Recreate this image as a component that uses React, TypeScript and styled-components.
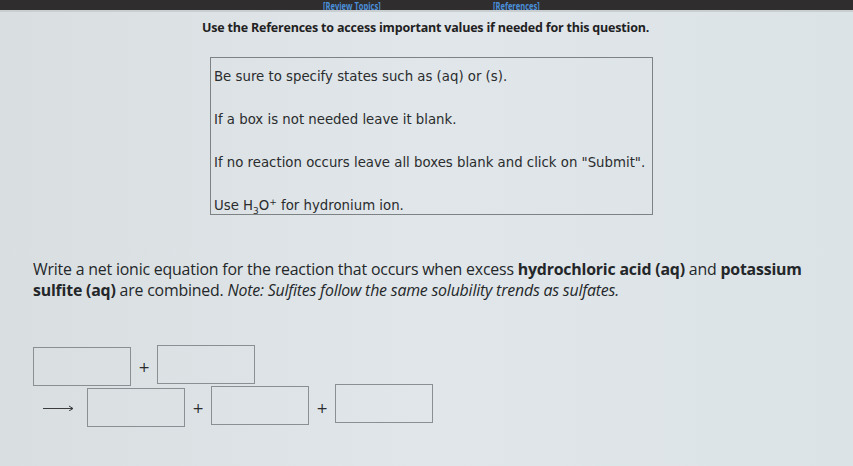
import styled, { createGlobalStyle } from 'styled-components'

const Global = createGlobalStyle`
  html, body { margin: 0; padding: 0; }
  body {
    width: 853px;
    height: 466px;
    overflow: hidden;
    background: linear-gradient(90deg, #d9dfe1 0%, #e0e6e9 50%, #dce3e7 100%);
  }
`

const TopBar = styled.div`
  height: 10px;
  background: #2f2d2e;
  display: flex;
  align-items: flex-end;
  overflow: hidden;
  border-bottom: 2px solid #c9ced0;
`

const TopLink = styled.span<{ $left: number }>`
  margin-left: ${p => p.$left}px;
  flex: 0 0 auto;
  font-family: "Open Sans", sans-serif;
  font-weight: 700;
  font-size: 10.5px;
  line-height: 12px;
  color: #4b8fd9;
  transform: translateY(2px) scaleX(0.72);
  transform-origin: left bottom;
`

const Page = styled.div`
  display: flex;
  flex-direction: column;
`

const Intro = styled.div`
  margin-top: 7px;
  text-align: center;
  padding-right: 2px;
  font-family: "Open Sans", sans-serif;
  font-weight: 700;
  font-size: 12.5px;
  color: #1f2123;
  letter-spacing: -0.2px;
`

const HintBox = styled.div`
  margin: 21px 0 0 210px;
  width: 443px;
  height: 158px;
  border: 1px solid #7d8285;
  box-sizing: border-box;
  padding: 8px 0 0 3px;
  display: flex;
  flex-direction: column;
  gap: 22px;
`

const Hint = styled.div`
  font-family: "DejaVu Sans", Verdana, sans-serif;
  font-size: 13.3px;
  line-height: 21px;
  color: #2a2c2e;
  white-space: nowrap;

  sub, sup {
    font-size: 9px;
    line-height: 0;
  }
  sub {
    vertical-align: -4px;
  }
`

const Question = styled.p`
  margin: 44px 0 0 33px;
  width: 775px;
  font-family: "Open Sans", sans-serif;
  font-size: 15.9px;
  line-height: 21px;
  color: #24272a;
  letter-spacing: -0.2px;
`

const Equation = styled.div`
  margin: 46px 0 0 33px;
  display: flex;
  flex-direction: column;
`

const EqRow = styled.div<{ $gap?: number }>`
  display: flex;
  align-items: center;
  margin-top: ${p => p.$gap ?? 0}px;
`

const AnswerBox = styled.div<{ $shift?: number }>`
  width: 98px;
  height: 39px;
  box-sizing: border-box;
  border: 1px solid #8a8f93;
  transform: translateY(${p => p.$shift ?? 0}px);
`

const Plus = styled.span`
  width: 26px;
  text-align: center;
  font-family: "DejaVu Sans", sans-serif;
  font-size: 14px;
  color: #2a2c2e;
`

const Arrow = styled.span`
  width: 54px;
  display: flex;
  align-items: center;
  padding-left: 10px;
  box-sizing: border-box;
`

export default function App() {
  return (
    <>
      <Global />
      <TopBar>
        <TopLink $left={323}>[Review Topics]</TopLink>
        <TopLink $left={90}>[References]</TopLink>
      </TopBar>
      <Page>
        <Intro>Use the References to access important values if needed for this question.</Intro>
        <HintBox>
          <Hint>Be sure to specify states such as (aq) or (s).</Hint>
          <Hint>If a box is not needed leave it blank.</Hint>
          <Hint>If no reaction occurs leave all boxes blank and click on "Submit".</Hint>
          <Hint>Use H<sub>3</sub>O<sup>+</sup> for hydronium ion.</Hint>
        </HintBox>
        <Question>
          Write a net ionic equation for the reaction that occurs when excess <b>hydrochloric acid (aq)</b> and{' '}
          <b>potassium sulfite (aq)</b> are combined. <i>Note: Sulfites follow the same solubility trends as sulfates.</i>
        </Question>
        <Equation>
          <EqRow>
            <AnswerBox />
            <Plus>+</Plus>
            <AnswerBox $shift={-2} />
          </EqRow>
          <EqRow $gap={2}>
            <Arrow>
              <svg width="31" height="6" viewBox="0 0 31 6">
                <path d="M0 3.5H30M26 1L30 3.5L26 6" stroke="#3a3c3e" strokeWidth="1" fill="none" />
              </svg>
            </Arrow>
            <AnswerBox />
            <Plus>+</Plus>
            <AnswerBox $shift={-2} />
            <Plus>+</Plus>
            <AnswerBox $shift={-4} />
          </EqRow>
        </Equation>
      </Page>
    </>
  )
}
